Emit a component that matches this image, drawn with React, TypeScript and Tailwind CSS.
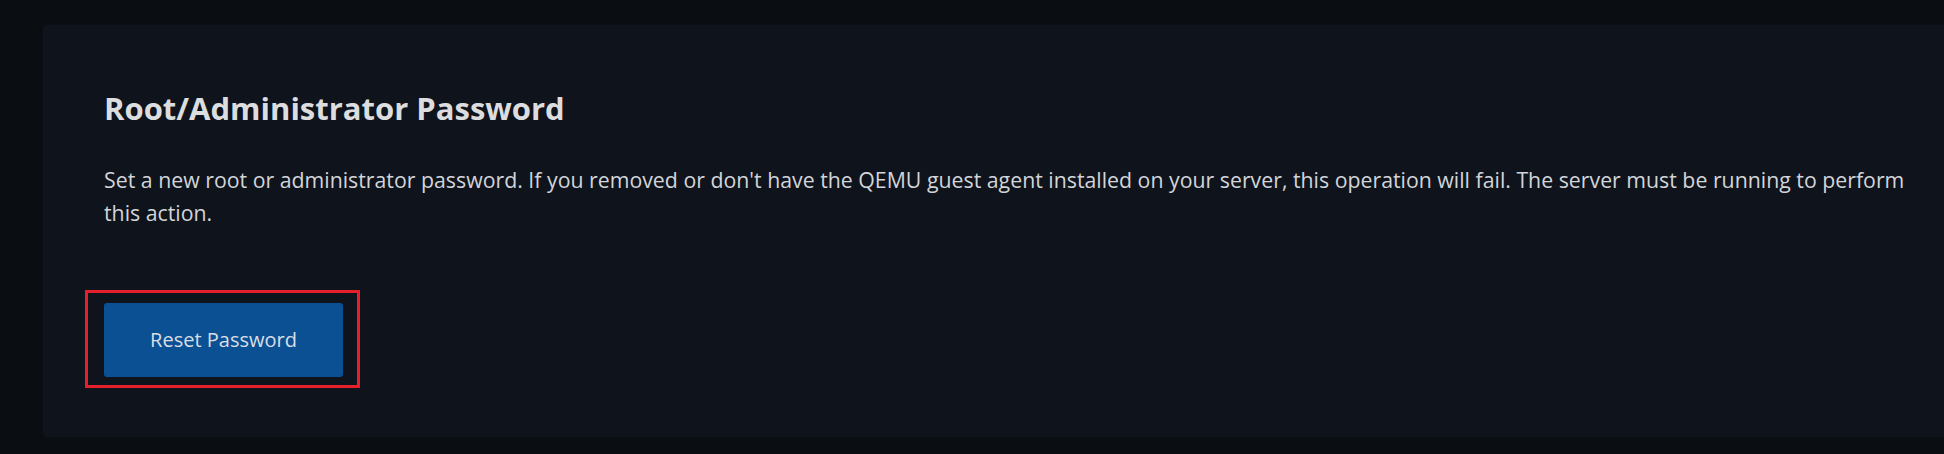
import React from 'react';

const App: React.FC = () => {
  return (
    <div
      className="h-[454px] w-full overflow-hidden bg-[#0a0d12] pl-[43px] pt-[25px]"
      style={{ fontFamily: '"Open Sans", "Noto Sans", sans-serif' }}
    >
      {/* PASSWORD CARD */}
      <div className="h-[412px] rounded-l-[4px] bg-[#0f131b] pl-[61px] pt-[62px] pr-[15px]">
        <h2 className="text-[31px] font-bold leading-[42px] text-[#dcdddf]">
          Root/Administrator Password
        </h2>
        <p className="mt-[34px] max-w-[1815px] text-[21.3px] leading-[33px] text-[#d2d5d9]">
          Set a new root or administrator password. If you removed or don't have the QEMU guest agent installed on
          your server, this operation will fail. The server must be running to perform this action.
        </p>

        <div className="relative mt-[74px] inline-block">
          <button className="flex h-[74px] w-[239px] items-center justify-center rounded-[3px] bg-[#0b5093] text-[20px] text-[#d9dee6]">
            Reset Password
          </button>
          {/* highlight outline */}
          <span className="pointer-events-none absolute -bottom-[11px] -left-[19px] -right-[17px] -top-[13px] border-[3px] border-[#e5202a]" />
        </div>
      </div>
    </div>
  );
};

export default App;
